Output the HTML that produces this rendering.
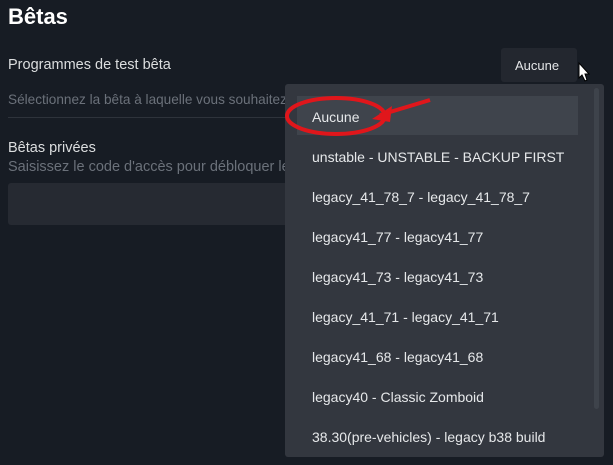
<!DOCTYPE html>
<html><head><style>
body{margin:0;width:613px;height:465px;background:#171c24;font-family:"Liberation Sans","DejaVu Sans",sans-serif;position:relative;overflow:hidden;color:#dfe3e8}
.a{position:absolute;white-space:nowrap}
</style></head><body>
<div class="a" style="left:8px;top:4px;font-size:22px;font-weight:bold;color:#fff">Bêtas</div>
<div class="a" style="left:8px;top:57px;font-size:14.5px;color:#dcdedf">Programmes de test bêta</div>
<div class="a" style="left:501px;top:48px;width:76px;height:34px;background:#23272f;border-radius:3px"></div>
<div class="a" style="left:515px;top:58px;font-size:13px;color:#e4e6e8">Aucune</div>
<div class="a" style="left:8px;top:92px;font-size:13.6px;color:#6b717a">Sélectionnez la bêta à laquelle vous souhaitez</div>
<div class="a" style="left:8px;top:117px;width:280px;height:1px;background:#2e333b"></div>
<div class="a" style="left:8px;top:140px;font-size:14.5px;color:#dcdedf">Bêtas privées</div>
<div class="a" style="left:8px;top:159px;font-size:14.5px;color:#6b717a">Saisissez le code d'accès pour débloquer le</div>
<div class="a" style="left:8px;top:183px;width:290px;height:42px;background:#262a32;border-radius:3px"></div>
<div class="a" style="left:285px;top:84px;width:319px;height:373px;background:#33373f;border-radius:3px"></div>
<div class="a" style="left:594px;top:88px;width:5px;height:321px;background:#3e434b;border-radius:3px"></div>
<div class="a" style="left:297px;top:96px;width:281px;height:39px;background:#3f444c"></div>
<div style="position:absolute;left:312px;top:97px;font-size:14px;color:#e6e8ea;line-height:40px">
<div>Aucune</div><div>unstable - UNSTABLE - BACKUP FIRST</div><div>legacy_41_78_7 - legacy_41_78_7</div><div>legacy41_77 - legacy41_77</div><div>legacy41_73 - legacy41_73</div><div>legacy_41_71 - legacy_41_71</div><div>legacy41_68 - legacy41_68</div><div>legacy40 - Classic Zomboid</div><div>38.30(pre-vehicles) - legacy b38 build</div>
</div>
<svg class="a" style="left:0;top:0" width="613" height="465">
<ellipse cx="336" cy="116" rx="49" ry="18" fill="none" stroke="#e0161b" stroke-width="4"/>
<line x1="430" y1="100" x2="380" y2="115" stroke="#e0161b" stroke-width="4"/>
<polygon points="372,119 392,106 390,122" fill="#e0161b"/>
<path d="M579,63 L579,78 L582,75 L585,81 L587,80 L585,74 L589,74 Z" fill="#fff" stroke="#000" stroke-width="1"/>
</svg>
</body></html>
